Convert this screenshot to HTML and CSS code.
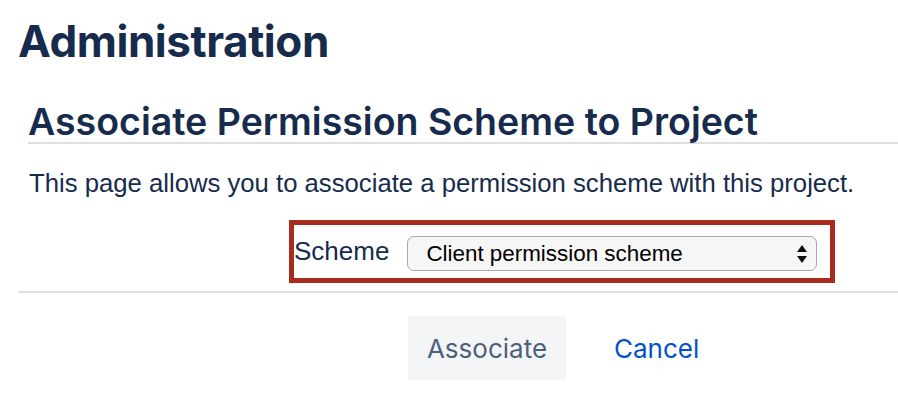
FILE: index.html
```html
<!DOCTYPE html>
<html lang="en">
<head>
<meta charset="utf-8">
<title>Associate Permission Scheme to Project</title>
<link rel="stylesheet" href="styles.css">
</head>
<body>
<div class="page">
  <h1 class="page-title">Administration</h1>
  <section class="panel">
    <h2 class="panel-title">Associate Permission Scheme to Project</h2>
    <p class="panel-desc">This page allows you to associate a permission scheme with this project.</p>
    <form class="assoc-form">
      <div class="field-row">
        <div class="highlight">
          <label class="field-label" for="scheme">Scheme</label>
          <div class="select-wrap">
            <select id="scheme" class="select">
              <option>Client permission scheme</option>
            </select>
            <svg class="select-arrows" width="10" height="18" viewBox="0 0 10 18"><path d="M5 0 L10 7 L0 7 Z M0 11 L10 11 L5 18 Z" fill="#111"/></svg>
          </div>
        </div>
      </div>
      <div class="buttons">
        <button type="button" class="btn">Associate</button>
        <a class="link" href="#">Cancel</a>
      </div>
    </form>
  </section>
</div>
</body>
</html>
```

FILE: styles.css
```css
html, body {
  margin: 0;
  padding: 0;
  background: #fff;
}
.page {
  padding: 0 0 0 18px;
  font-family: Inter, "Liberation Sans", sans-serif;
  color: #172b4d;
}
.page-title {
  margin: 0;
  padding-top: 19px;
  font-size: 44px;
  line-height: 44px;
  font-weight: 700;
  letter-spacing: -0.01em;
}
.panel {
  margin-top: 39px;
}
.panel-title {
  margin: 0 0 0 10px;
  font-size: 37.5px;
  line-height: 40px;
  font-weight: 600;
  padding-bottom: 0;
  border-bottom: 2px solid #dfdfdf;
}
.panel-desc {
  margin: 24px 0 0 11px;
  font-family: "Liberation Sans", sans-serif;
  font-size: 25.7px;
  line-height: 30px;
}
.assoc-form {
  margin: 0;
}
.field-row {
  margin-top: 22px;
  padding-left: 271px;
  padding-bottom: 8px;
  border-bottom: 2px solid #dfdfdf;
  display: flex;
}
.highlight {
  box-sizing: border-box;
  width: 546px;
  height: 63px;
  border: 5px solid #a82b1d;
  display: flex;
  align-items: center;
  gap: 18px;
  padding-left: 0;
}
.field-label {
  font-family: "Liberation Sans", sans-serif;
  font-size: 26px;
  color: #172b4d;
}
.select-wrap {
  position: relative;
  width: 410px;
  height: 35px;
  margin-top: 4px;
}
.select {
  -webkit-appearance: none;
  appearance: none;
  box-sizing: border-box;
  width: 100%;
  height: 100%;
  margin: 0;
  padding: 0 0 0 18px;
  border: 1.5px solid #a6a6a6;
  border-radius: 7px;
  background: #f6f6f6;
  font-family: "Liberation Sans", sans-serif;
  font-size: 22.4px;
  color: #000;
}
.select-arrows {
  position: absolute;
  right: 10px;
  top: 9px;
  pointer-events: none;
}
.buttons {
  display: flex;
  align-items: center;
  gap: 48px;
  margin-top: 23px;
  padding-left: 390px;
}
.btn {
  box-sizing: border-box;
  width: 158px;
  height: 64px;
  border: 0;
  border-radius: 4px;
  background: #f4f5f7;
  color: #505f79;
  font-family: Inter, "Liberation Sans", sans-serif;
  font-size: 26px;
  padding: 0;
}
.link {
  color: #0052cc;
  text-decoration: none;
  font-size: 26px;
}
```
